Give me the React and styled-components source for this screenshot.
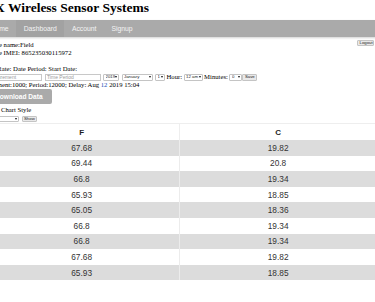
import React from 'react';
import styled, { createGlobalStyle } from 'styled-components';

const GlobalStyle = createGlobalStyle`
  html, body {
    margin: 0;
    padding: 0;
    background: #fff;
  }
`;

const Viewport = styled.div`
  width: 375px;
  height: 302px;
  overflow: hidden;
`;

const Page = styled.div`
  width: 393px;
  margin-left: -17px;
  font-family: "Liberation Serif", "Times New Roman", serif;
  color: #000;
`;

const Title = styled.h1`
  margin: 0 0 4px 0;
  padding-left: 12px;
  font-size: 13.5px;
  line-height: 16px;
  font-weight: 700;
  white-space: nowrap;
`;

const NavBar = styled.nav`
  display: flex;
  height: 17px;
  background: #aaaaaa;
  box-shadow: 0 1px 2px rgba(0, 0, 0, 0.18);
`;

const NavItem = styled.a`
  display: flex;
  align-items: center;
  padding: 0 7.5px;
  font-family: "Liberation Sans", Arial, sans-serif;
  font-size: 6.8px;
  color: #f4f4f4;
  text-decoration: none;
  background: ${props => props.$active ? '#a2a2a2' : 'transparent'};
`;

const Info = styled.div`
  padding-top: 4px;
  font-size: 6.7px;
  line-height: 8px;
`;

const Line = styled.div`
  height: 8px;
  white-space: nowrap;
`;

const SmallButton = styled.button`
  height: ${props => props.$h || 6}px;
  padding: 0 1.5px;
  margin: 0;
  border: 0.5px solid #c4c4c4;
  border-radius: 1px;
  background: #e9e9e9;
  color: #222;
  font-family: "Liberation Sans", Arial, sans-serif;
  font-size: 4.3px;
  line-height: 1;
`;

const LogoutButton = styled(SmallButton)`
  float: right;
  width: 17px;
  margin-top: -1px;
  margin-right: 2px;
`;

const ControlRow = styled.div`
  display: flex;
  align-items: center;
  height: 8px;
  gap: 2.5px;
  white-space: nowrap;
`;

const TextInput = styled.input`
  box-sizing: border-box;
  width: ${props => props.$w}px;
  height: 7px;
  padding: 0 1.5px;
  margin: 0;
  border: 0.5px solid #c8c8c8;
  font-family: "Liberation Sans", Arial, sans-serif;
  font-size: 5px;
  &::placeholder {
    color: #9a9a9a;
  }
`;

const SelectWrap = styled.span`
  position: relative;
  display: inline-flex;
  width: ${props => props.$w}px;
  height: ${props => props.$h || 7}px;
  &::after {
    content: '';
    position: absolute;
    right: 2px;
    top: 50%;
    margin-top: -1px;
    border-left: 1.3px solid transparent;
    border-right: 1.3px solid transparent;
    border-top: 2px solid #111;
    pointer-events: none;
  }
`;

const Select = styled.select`
  appearance: none;
  box-sizing: border-box;
  width: 100%;
  height: 100%;
  padding: 0 1.5px;
  margin: 0;
  border: 0.5px solid #c4c4c4;
  border-radius: 1px;
  background: #fff;
  color: #222;
  font-family: "Liberation Sans", Arial, sans-serif;
  font-size: 4.3px;
  line-height: 1;
`;

const Label = styled.span`
  font-size: 6.7px;
  margin: 0 -1px;
`;

const DateLink = styled.span`
  color: #1a4fb5;
`;

const DownloadButton = styled.button`
  display: block;
  height: 15px;
  margin: 0 0 2px 0;
  padding: 0 9px 0 12px;
  border: none;
  border-radius: 2px;
  background: #aaaaaa;
  color: #fff;
  font-family: "Liberation Sans", Arial, sans-serif;
  font-weight: 700;
  font-size: 6.6px;
`;

const Table = styled.table`
  width: 393px;
  margin-top: 1px;
  border-collapse: collapse;
  table-layout: fixed;
  font-family: "Liberation Sans", Arial, sans-serif;
`;

const HeadCell = styled.th`
  height: 16px;
  padding: 0;
  border-top: 1px solid #eeeeee;
  border-left: 1px solid #eeeeee;
  font-size: 8px;
  font-weight: 700;
  color: #1e1e1e;
  text-align: center;
`;

const Row = styled.tr`
  background: ${props => props.$odd ? '#dcdcdc' : '#ffffff'};
`;

const Cell = styled.td`
  height: 15.6px;
  padding: 0;
  border-left: 1px solid #ececec;
  font-size: 8.3px;
  color: #333;
  text-align: center;
`;

const readings = [
  ['67.68', '19.82'],
  ['69.44', '20.8'],
  ['66.8', '19.34'],
  ['65.93', '18.85'],
  ['65.05', '18.36'],
  ['66.8', '19.34'],
  ['66.8', '19.34'],
  ['67.68', '19.82'],
  ['65.93', '18.85'],
];

const App = () => (
  <Viewport>
    <GlobalStyle />
    <Page>
      <Title>X Wireless Sensor Systems</Title>
      <NavBar>
        <NavItem href="#">Home</NavItem>
        <NavItem href="#" $active>Dashboard</NavItem>
        <NavItem href="#">Account</NavItem>
        <NavItem href="#">Signup</NavItem>
      </NavBar>
      <Info>
        <LogoutButton>Logout</LogoutButton>
        <Line>Device name:Field</Line>
        <Line>Device IMEI: 865235030115972</Line>
        <Line />
        <Line>Data Rate: Date Period: Start Date:</Line>
        <ControlRow>
          <TextInput $w={59} placeholder="Measurement" />
          <TextInput $w={56} placeholder="Time Period" />
          <SelectWrap $w={16}><Select defaultValue="2019"><option>2019</option></Select></SelectWrap>
          <SelectWrap $w={31}><Select defaultValue="January"><option>January</option></Select></SelectWrap>
          <SelectWrap $w={10}><Select defaultValue="1"><option>1</option></Select></SelectWrap>
          <Label>Hour:</Label>
          <SelectWrap $w={19}><Select defaultValue="12 am"><option>12 am</option></Select></SelectWrap>
          <Label>Minutes:</Label>
          <SelectWrap $w={13}><Select defaultValue="0"><option>0</option></Select></SelectWrap>
          <SmallButton $h={7} style={{ marginLeft: '-2.5px' }}>Save</SmallButton>
        </ControlRow>
        <Line>Increment:1000; Period:12000; Delay: Aug <DateLink>12</DateLink> 2019 15:04</Line>
        <DownloadButton>Download Data</DownloadButton>
        <Line>Select Chart Style</Line>
        <ControlRow style={{ height: '7px', marginTop: '1px' }}>
          <SelectWrap $w={36} $h={6}><Select defaultValue="Line"><option>Line</option></Select></SelectWrap>
          <SmallButton>Show</SmallButton>
        </ControlRow>
      </Info>
      <Table>
        <thead>
          <tr>
            <HeadCell>F</HeadCell>
            <HeadCell>C</HeadCell>
          </tr>
        </thead>
        <tbody>
          {readings.map(([f, c], i) => (
            <Row key={i} $odd={i % 2 === 0}>
              <Cell>{f}</Cell>
              <Cell>{c}</Cell>
            </Row>
          ))}
        </tbody>
      </Table>
    </Page>
  </Viewport>
);

export default App;
